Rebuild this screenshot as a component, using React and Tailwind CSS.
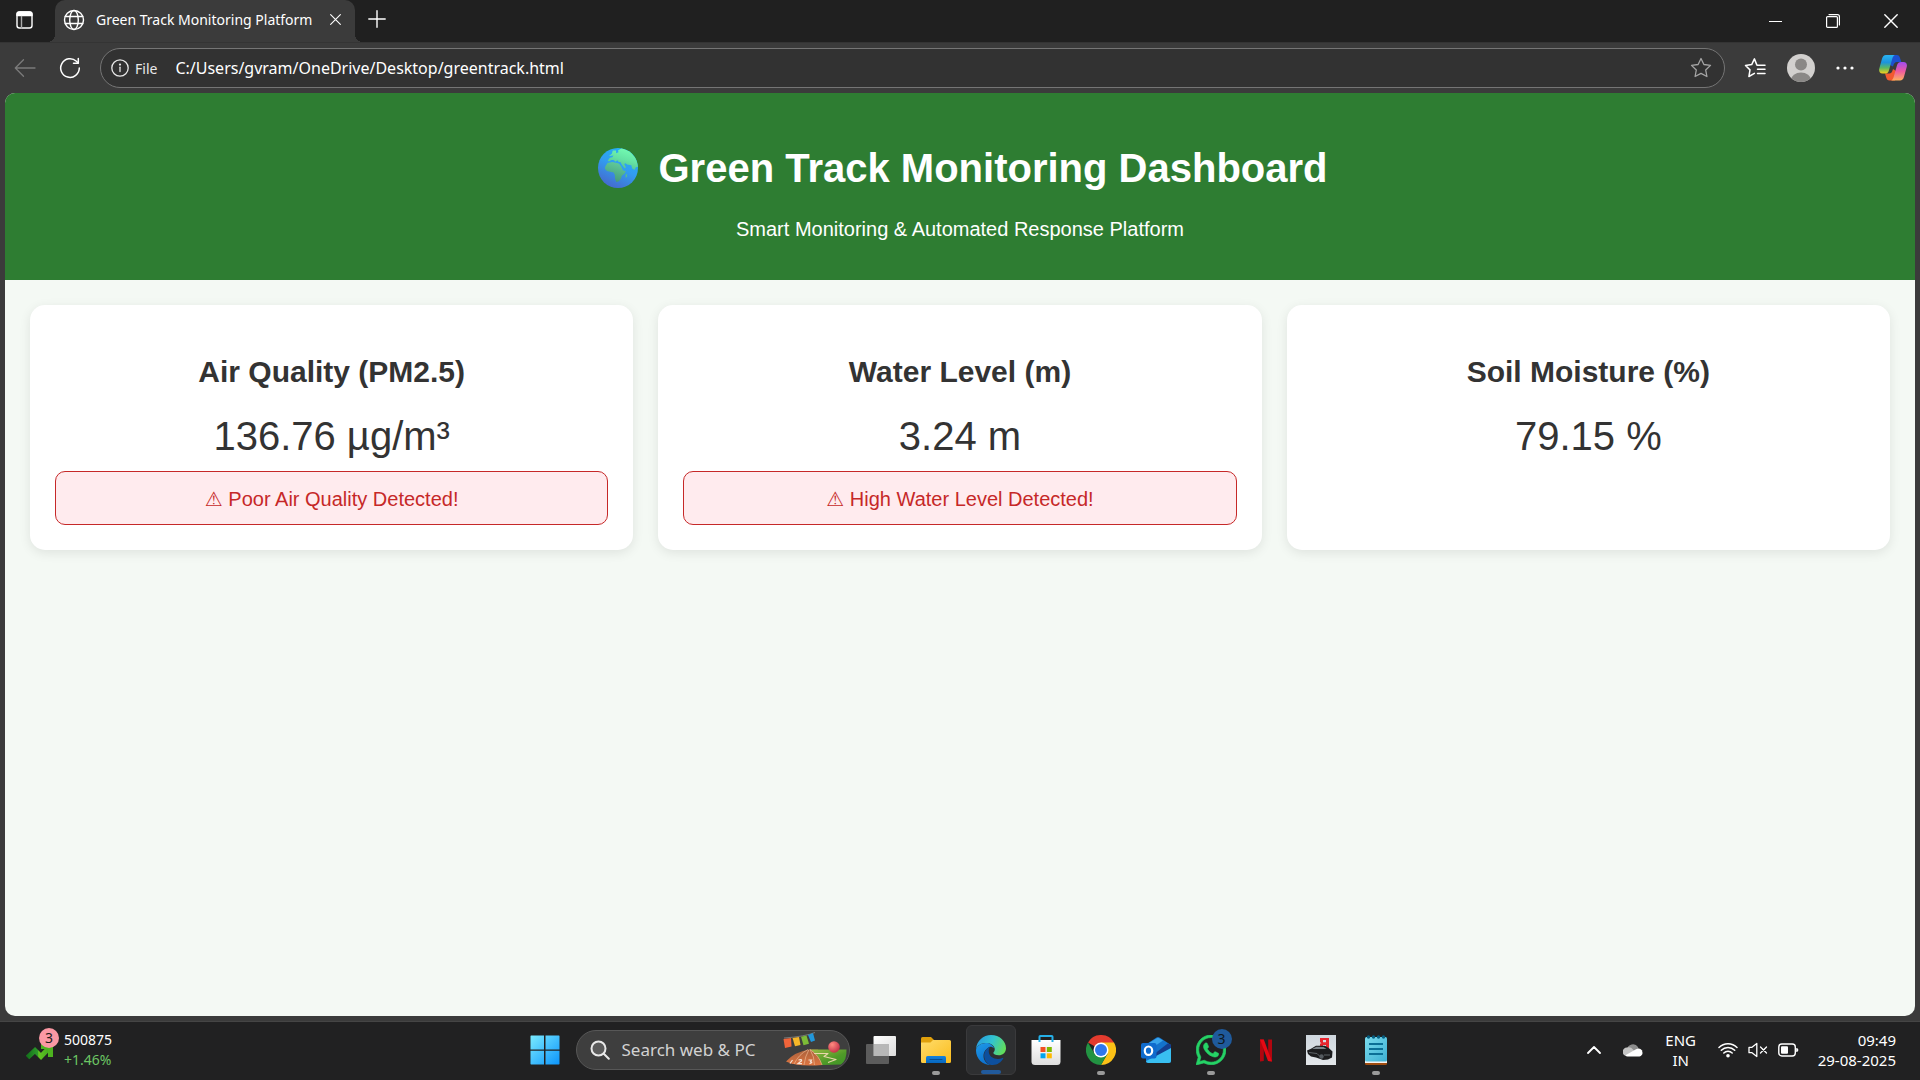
import React from "react";

const ui = "font-['Noto_Sans','Open_Sans',sans-serif]";

/* ---------- browser chrome icons ---------- */

const line = { fill: "none", stroke: "currentColor", strokeLinecap: "round", strokeLinejoin: "round" };

const TabActionsIcon = () => (
  <svg width="20" height="20" viewBox="0 0 20 20" {...line} strokeWidth="1.4">
    <rect x="2" y="2" width="15" height="16" rx="2.5" />
    <path d="M2 5.500V4.500A2.5 2.5 0 0 1 4.500 2h10A2.5 2.5 0 0 1 17 4.500V5.500Z" fill="currentColor" />
    <path d="M6.500 6.500V18" stroke="#aaa" />
  </svg>
);

const GlobeIcon = () => (
  <svg width="22" height="22" viewBox="0 0 22 22" {...line} strokeWidth="1.4">
    <circle cx="11" cy="11" r="9.500" />
    <ellipse cx="11" cy="11" rx="4.300" ry="9.500" />
    <path d="M2.300 7.500h17.400M2.300 14.500h17.400" />
  </svg>
);

const CrossIcon = ({ size }) => (
  <svg width={size} height={size} viewBox="0 0 12 12" {...line} strokeWidth="1.2">
    <path d="M.7.7l10.600 10.600M11.300.7L.7 11.300" />
  </svg>
);

const PlusIcon = () => (
  <svg width="18" height="18" viewBox="0 0 18 18" {...line} strokeWidth="1.400">
    <path d="M9 .8v16.400M.8 9h16.400" />
  </svg>
);

const BackIcon = () => (
  <svg width="22" height="20" viewBox="0 0 22 20" {...line} strokeWidth="1.300">
    <path d="M21 10H1.500M9.500 1.800L1.300 10l8.200 8.200" />
  </svg>
);

const ReloadIcon = () => (
  <svg width="22" height="22" viewBox="0 0 22 22" {...line} strokeWidth="1.500">
    <path d="M20.300 11a9.300 9.300 0 1 1-2.900-6.700l1.600 1.600" />
    <path d="M19.300 1.500v4.700h-4.800" />
  </svg>
);

const InfoIcon = () => (
  <svg width="18" height="18" viewBox="0 0 18 18" {...line} strokeWidth="1.300">
    <circle cx="9" cy="9" r="8.200" />
    <path d="M9 8.200v4.300" />
    <circle cx="9" cy="5.600" r=".5" fill="currentColor" />
  </svg>
);

const StarIcon = () => (
  <svg width="22" height="22" viewBox="0 0 22 22" {...line} strokeWidth="1.300">
    <path d="M11 1.500l2.900 6 6.600.9-4.800 4.600 1.200 6.500-5.900-3.100-5.900 3.100 1.200-6.500L1.500 8.400l6.600-.9z" />
  </svg>
);

const FavoritesIcon = () => (
  <svg width="22" height="22" viewBox="0 0 22 22" {...line} strokeWidth="1.500">
    <path d="M13.500 8.200l-.6-.1L10.400 1.900 7.700 7.600l-6.200.9 4.500 4.400-1.100 6.600 5.500-3.100M13.500 8.200H21M13.500 12.300H21M13.500 16.400H21" />
  </svg>
);

const Avatar = () => (
  <svg width="28" height="28" viewBox="0 0 28 28">
    <defs>
      <clipPath id="avatarClip"><circle cx="14" cy="14" r="14" /></clipPath>
    </defs>
    <g clipPath="url(#avatarClip)">
      <rect width="28" height="28" fill="#d2d0ce" />
      <circle cx="14" cy="10.500" r="6" fill="#8a8886" />
      <ellipse cx="14" cy="26" rx="10" ry="7.500" fill="#8a8886" />
    </g>
  </svg>
);

const CopilotIcon = () => (
  <svg width="28" height="28" viewBox="0 0 28 28">
    <defs>
      <linearGradient id="cpA" x1="0" y1="0" x2="0" y2="1">
        <stop offset="0" stopColor="#2ab4f2" /><stop offset=".4" stopColor="#1c93dd" />
        <stop offset=".7" stopColor="#5cb860" /><stop offset="1" stopColor="#f6cf1c" />
      </linearGradient>
      <linearGradient id="cpB" x1="0" y1="0" x2="0" y2="1">
        <stop offset="0" stopColor="#a04cf0" /><stop offset=".5" stopColor="#ee5aa0" />
        <stop offset="1" stopColor="#ffb05e" />
      </linearGradient>
    </defs>
    <path d="M12 1h5.800c1.800 0 2.600 1 3.200 2.900l1.300 4H18c-2.200 0-3.200 1.600-4 4.600L11 11z" fill="#1d50cf" />
    <path d="M16 26.500h-5.500c-1.900 0-2.700-1-3.300-2.900L6 19.500h4c2.200 0 3.300-1.600 4-4.600l3 2z" fill="#f25a30" />
    <path d="M7 1h9c-1.600.6-2.200 2-2.800 4L9.900 16.400c-.7 2.300-1.900 3.100-4 3.100H3.500C.6 19.500-.4 17.200.3 14.500l2.700-9.700C3.700 2.300 4.900 1 7 1z" fill="url(#cpA)" />
    <path d="M21 26.500h-9c1.600-.6 2.200-2 2.800-4l3.300-11.400c.7-2.300 1.900-3.100 4-3.100h2.400c2.900 0 3.900 2.300 3.200 5L25 22.700c-.7 2.500-1.900 3.800-4 3.800z" fill="url(#cpB)" />
  </svg>
);

/* ---------- page icons ---------- */

const EarthIcon = () => (
  <svg width="40" height="40" viewBox="0 0 42 42" className="shrink-0">
    <defs>
      <linearGradient id="sea" x1=".8" y1="0" x2=".3" y2="1">
        <stop offset="0" stopColor="#22b5f8" /><stop offset=".5" stopColor="#329cf0" /><stop offset="1" stopColor="#4668cc" />
      </linearGradient>
      <linearGradient id="land" x1=".8" y1="0" x2=".4" y2="1">
        <stop offset="0" stopColor="#76ffb4" /><stop offset=".55" stopColor="#64e2a4" /><stop offset="1" stopColor="#54bb90" />
      </linearGradient>
      <linearGradient id="africa" x1=".8" y1="0" x2=".5" y2="1">
        <stop offset="0" stopColor="#62cf9c" /><stop offset="1" stopColor="#459a7c" />
      </linearGradient>
      <clipPath id="earthClip"><circle cx="21" cy="21" r="21" /></clipPath>
    </defs>
    <circle cx="21" cy="21" r="21" fill="url(#sea)" />
    <g clipPath="url(#earthClip)">
      <path d="M11.500 8.500L14.500 6l1-3.500 3.500 0 0 3 2.500-1L21 2.500 25 0l9 4 6 7 2.500 9-2.500 0-1.800 3-2.300-1.600-.9-3.400-4.500-.6-1.500-1.400-1.500.8 1.800 3.400-1.200 1.300-2.800-3.600-1.800-3.100-1.700 0-1.500-2-2 1.700-1.800-1.800-2.500 0-2.500 1.600-1.200-1.200 2.200-2.800 2.500-.5 1.300-1.800z" fill="url(#land)" />
      <path d="M7.800 19.200L10 15.700l5-1.100 3.500.9 3.500.9 2.200 2.800 2.100 4.300 2.900.7-1.400 2.800-2.800 2.200-.8 2.800-2.200 2.900-2.800.7-1.400-3.600v-3.500l-1.400-2.900-3.600-.7-3.500-.7-2.200-2.800z" fill="url(#africa)" />
      <path d="M29 28l1.500-1 0 3-1.500 1.500z" fill="#55bd90" />
    </g>
  </svg>
);

/* ---------- taskbar icons ---------- */

const WindowsLogo = () => (
  <svg width="30" height="30" viewBox="0 0 30 30">
    <defs>
      <linearGradient id="win" gradientUnits="userSpaceOnUse" x1="0" y1="0" x2="30" y2="30">
        <stop offset="0" stopColor="#7cecff" /><stop offset="1" stopColor="#0a93fb" />
      </linearGradient>
    </defs>
    <path d="M1 .5h13v14H.5V1zM15.500.5h13.500l.5.5v13.500h-14zM.5 15.800h13.500v13.700H1l-.5-.5zM15.500 15.800h14V29l-.5.5H15.500z" fill="url(#win)" />
  </svg>
);

const SearchIcon = () => (
  <svg width="20" height="20" viewBox="0 0 20 20" fill="none" stroke="#e8e8e8" strokeWidth="2" strokeLinecap="round">
    <circle cx="8.500" cy="8.500" r="7" fill="#5b5b5b" />
    <path d="M13.800 13.800l5 5" />
  </svg>
);

const SportsArt = () => (
  <svg width="64" height="36" viewBox="0 0 64 36">
    <defs>
      <linearGradient id="track" x1="0" y1="0" x2="0" y2="1">
        <stop offset="0" stopColor="#a8603c" /><stop offset="1" stopColor="#df7641" />
      </linearGradient>
      <linearGradient id="grass" x1="0" y1="0" x2="1" y2="1">
        <stop offset="0" stopColor="#9bbb45" /><stop offset=".6" stopColor="#4f9a28" /><stop offset="1" stopColor="#3e9626" />
      </linearGradient>
      <radialGradient id="ball" cx=".35" cy=".3" r=".8">
        <stop offset="0" stopColor="#ff8b80" /><stop offset="1" stopColor="#bd2843" />
      </radialGradient>
    </defs>
    <path d="M1 6Q22 4.500 32 .5" stroke="#777" fill="none" />
    <path d="M.5 7l7.500-1 .5 8.500-6.500 1.500z" fill="#f0643a" />
    <path d="M9.500 6l6.500-.9 1.500 7.800-5.500 1.300z" fill="#f6b628" />
    <path d="M18 4.800l5.500-1.300 2.500 8.300-5.500 1.400z" fill="#7dbb37" />
    <path d="M25 3l5-2 2 7.500-4 1.500z" fill="#2297db" />
    <path d="M3 29.500Q12 19.500 27 17.500l8 0 4 15.500Q14 35 3 29.500z" fill="url(#track)" />
    <path d="M27 17.500h36.500Q64 28 58 32.500l-19 .5Q36 23 27 17.500z" fill="url(#grass)" />
    <path d="M25 17.500Q16 22 11 32M26 17.500q-4 7-5 15.500M27 17.500q4.500 7 4.500 15.500M27 17.500q9 6 12 15.500" stroke="#e7ad87" strokeWidth=".8" fill="none" />
    <path d="M9.500 28l-2.500 3.500M15.500 28q3.500-1 3 .8l-3.500 2.800h4M25.500 28h3l-1 1.700q3 .6-1 2" stroke="#f5e3d5" strokeWidth="1.200" fill="none" />
    <path d="M31 21.500h14l-4 3 12 3-8 3" stroke="#e8d6aa" strokeWidth="1.200" fill="none" strokeLinejoin="round" />
    <circle cx="51" cy="15" r="5.800" fill="url(#ball)" />
  </svg>
);

const TaskViewIcon = () => (
  <svg width="30" height="30" viewBox="0 0 30 30">
    <defs>
      <linearGradient id="tv" x1="0" y1="0" x2="1" y2="1">
        <stop offset="0" stopColor="#fff" /><stop offset="1" stopColor="#dcdcdc" />
      </linearGradient>
    </defs>
    <rect x="7.500" y="1" width="22.500" height="20" rx="1" fill="url(#tv)" />
    <rect x="0" y="9" width="23" height="20" rx="1" fill="#666" opacity=".85" />
    <rect x="7.500" y="9" width="15.500" height="12" fill="#b8b8b8" />
  </svg>
);

const ExplorerIcon = () => (
  <svg width="30" height="30" viewBox="0 0 30 30">
    <defs>
      <linearGradient id="fold" x1="0" y1="0" x2="1" y2="1">
        <stop offset="0" stopColor="#ffdc6b" /><stop offset="1" stopColor="#fbbc1c" />
      </linearGradient>
      <linearGradient id="foldBlue" x1="0" y1="0" x2="0" y2="1">
        <stop offset="0" stopColor="#1582dc" /><stop offset="1" stopColor="#0667c0" />
      </linearGradient>
    </defs>
    <path d="M0 3.500Q0 2 1.500 2H10l3 3v4H0z" fill="#e0a00c" />
    <path d="M0 7.500h9.500L12 5h16.500Q30 5 30 6.500v20q0 1.500-1.500 1.500h-27Q0 28 0 26.500z" fill="url(#fold)" />
    <path d="M5 28v-5.500Q5 21 6.500 21h17q1.500 0 1.500 1.500V28z" fill="url(#foldBlue)" />
    <path d="M9 24.500h12" stroke="#084e92" strokeLinecap="round" />
  </svg>
);

const EdgeIcon = () => (
  <svg width="30" height="30" viewBox="0 0 24 24">
    <defs>
      <linearGradient id="edgeTop" x1="0" y1=".3" x2="1" y2=".6">
        <stop offset="0" stopColor="#279be0" /><stop offset=".5" stopColor="#32c3cf" /><stop offset="1" stopColor="#63dd58" />
      </linearGradient>
      <linearGradient id="edgeMid" x1="0" y1="0" x2=".4" y2="1">
        <stop offset="0" stopColor="#1f9ae8" /><stop offset="1" stopColor="#0c70ce" />
      </linearGradient>
    </defs>
    <path d="M0 11C.6 4.700 5.700 0 12 0c7 0 12 5 12 10.500 0 3.600-2.800 5.600-5.800 5.600-2.700 0-4.300-.9-4.300-1.800 0-.6 1.100-1 1.100-2.900 0-2.500-2.800-5-6.500-5C4.500 6.400 1.400 8 0 11z" fill="url(#edgeTop)" />
    <path d="M8 6.400C4 6.400 0 9 0 12.300 0 19 5.400 24 12 24c-4-1-6-4-6-7.200 0-3.300 2-5.800 5-7.400 1.200-.2 2.600.3 3.400 1.200C13.500 8 11 6.400 8 6.400z" fill="url(#edgeMid)" />
    <path d="M11.200 9.300C8.400 10.700 6.500 13.300 6.500 16.500 6.500 21 10 24 13.500 24c3.600 0 6.700-2.300 8.300-5.200.3-.6-.1-.8-.6-.5-4.200 2.100-11 .2-11-5.300 0-1.400.4-2.800 1-3.700z" fill="#0d4f9d" />
  </svg>
);

const StoreIcon = () => (
  <svg width="30" height="30" viewBox="0 0 30 30">
    <defs>
      <linearGradient id="bag" x1="0" y1="0" x2="0" y2="1">
        <stop offset="0" stopColor="#fff" /><stop offset="1" stopColor="#dedede" />
      </linearGradient>
    </defs>
    <path d="M.5 5h29v21.500q0 3.500-3.500 3.500H4Q.5 30 .5 26.500z" fill="url(#bag)" />
    <path d="M8.500 7V1.800q0-.8.8-.8h11.400q.8 0 .8.800V7" fill="none" stroke="#25b0e8" strokeWidth="2" />
    <path d="M9.500 12h5v5h-5z" fill="#f25022" /><path d="M15.800 12h5v5h-5z" fill="#7fba00" />
    <path d="M9.500 18.300h5v5h-5z" fill="#00a4ef" /><path d="M15.800 18.300h5v5h-5z" fill="#ffb900" />
  </svg>
);

const ChromeIcon = () => (
  <svg width="30" height="30" viewBox="0 0 30 30">
    <path d="M15 15L2 7.500A15 15 0 0 1 28 7.500z" fill="#e33b2e" />
    <path d="M15 7.500H28A15 15 0 0 1 15 30l6.500-11.200z" fill="#fbc116" />
    <path d="M8.500 18.700L2 7.500A15 15 0 0 0 15 30l6.500-11.200L15 15z" fill="#229342" />
    <circle cx="15" cy="15" r="7.500" fill="#fff" /><circle cx="15" cy="15" r="6" fill="#2f77ec" />
  </svg>
);

const OutlookIcon = () => (
  <svg width="30" height="30" viewBox="0 0 30 30">
    <path d="M5 9.500L15.500 2.600q1.500-.9 3 0L30 10v15.500q0 2.500-2.500 2.500h-20Q5 28 5 25.500z" fill="#1473cc" />
    <path d="M8 8l9-5.600 5 3L11 13z" fill="#37a3ea" />
    <path d="M12 20L27 8.200 30 10v3.500L16 24z" fill="#143e8f" />
    <path d="M16 20.500l14-7.500v12.500q0 2.500-2.500 2.500h-20Q5 28 5 26z" fill="#39bff1" />
    <rect y="8" width="15.500" height="15.500" rx="2" fill="#0f6bcd" />
    <ellipse cx="7.500" cy="15.700" rx="3.700" ry="4.200" fill="none" stroke="#fff" strokeWidth="2.200" />
  </svg>
);

const WhatsAppIcon = () => (
  <svg width="30" height="30" viewBox="0 0 24 24" fill="#25d366" stroke="#25d366" strokeWidth=".5">
    <path d="M17.472 14.382c-.297-.149-1.758-.867-2.030-.967-.273-.099-.471-.148-.670.150-.197.297-.767.966-.940 1.164-.173.199-.347.223-.644.075-.297-.150-1.255-.463-2.390-1.475-.883-.788-1.480-1.761-1.653-2.059-.173-.297-.018-.458.130-.606.134-.133.298-.347.446-.520.149-.174.198-.298.298-.497.099-.198.050-.371-.025-.520-.075-.149-.669-1.612-.916-2.207-.242-.579-.487-.5-.669-.510-.173-.008-.371-.010-.570-.010-.198 0-.520.074-.792.372-.272.297-1.040 1.016-1.040 2.479 0 1.462 1.065 2.875 1.213 3.074.149.198 2.096 3.200 5.077 4.487.709.306 1.262.489 1.694.625.712.227 1.360.195 1.871.118.571-.085 1.758-.719 2.006-1.413.248-.694.248-1.289.173-1.413-.074-.124-.272-.198-.570-.347m-5.421 7.403h-.004a9.870 9.870 0 01-5.031-1.378l-.361-.214-3.741.982.998-3.648-.235-.374a9.860 9.860 0 01-1.510-5.260c.001-5.450 4.436-9.884 9.888-9.884 2.640 0 5.122 1.030 6.988 2.898a9.825 9.825 0 012.893 6.994c-.003 5.450-4.437 9.884-9.885 9.884m8.413-18.297A11.815 11.815 0 0012.050 0C5.495 0 .160 5.335.157 11.892c0 2.096.547 4.142 1.588 5.945L.057 24l6.305-1.654a11.882 11.882 0 005.683 1.448h.005c6.554 0 11.890-5.335 11.893-11.893a11.821 11.821 0 00-3.480-8.413z" />
  </svg>
);

const NetflixIcon = () => (
  <svg width="30" height="30" viewBox="0 0 30 30">
    <path d="M9 4.500h3.800V26L9 26.500zM17.200 4.500H21v22l-3.800-.5z" fill="#b1060f" />
    <path d="M9 4.500h3.800L21 26.500l-4-.5z" fill="#e50914" />
  </svg>
);

const CarIcon = () => (
  <svg width="30" height="30" viewBox="0 0 30 30">
    <defs>
      <linearGradient id="carBg" x1="0" y1="0" x2="0" y2="1">
        <stop offset="0" stopColor="#cfd7de" /><stop offset="1" stopColor="#e3e7ea" />
      </linearGradient>
    </defs>
    <rect width="30" height="30" fill="url(#carBg)" />
    <path d="M14 3h9v10H20V10h-3v3h-3V8.500h1.500L14 7zM17 5v2.300h3V5z" fill="#e8252f" fillRule="evenodd" />
    <path d="M1 15.500l4-1.700 5-3 9 0 4 2.500 3.500 3.200-.5 6-4 2-5 .5-7-2.500-5-1-3-2.500z" fill="#1b1c1e" />
    <path d="M6 14l4.500-2.300 7 .3 3 2z" fill="#7d858b" />
    <path d="M3 17.500l8 1 3 3M18 20h6" stroke="#5e6468" fill="none" />
    <circle cx="15.500" cy="21.500" r="2.200" fill="#555b60" />
  </svg>
);

const NotepadIcon = () => (
  <svg width="30" height="30" viewBox="0 0 30 30">
    <defs>
      <linearGradient id="note" x1="0" y1="0" x2="1" y2="1">
        <stop offset="0" stopColor="#7bdcee" /><stop offset="1" stopColor="#3db0d3" />
      </linearGradient>
    </defs>
    <rect x="4" y="25" width="22" height="5" rx="1.500" fill="#a14d10" />
    <rect x="4" y="24" width="22" height="4" fill="#f3f3f3" />
    <rect x="4" y="2" width="22" height="24.500" rx="1.500" fill="url(#note)" />
    <path d="M8 9h14M8 14h14M8 19h14" stroke="#0b6f96" strokeWidth="1.800" />
    <g fill="#085e80"><circle cx="7.500" cy="2" r="1.700" /><circle cx="12.500" cy="2" r="1.700" /><circle cx="17.500" cy="2" r="1.700" /><circle cx="22.500" cy="2" r="1.700" /></g>
  </svg>
);

const StockIcon = () => (
  <svg width="28" height="20" viewBox="0 0 28 20">
    <defs>
      <linearGradient id="stock" x1="0" y1="0" x2="1" y2="0">
        <stop offset="0" stopColor="#15741c" /><stop offset=".45" stopColor="#2d9a2a" /><stop offset=".5" stopColor="#63c421" /><stop offset="1" stopColor="#3fa71f" />
      </linearGradient>
    </defs>
    <path d="M1.500 15.500L9 8.500l6 6 9-9.500" fill="none" stroke="url(#stock)" strokeWidth="5" />
    <path d="M15 2h12v13h-5V7h-7z" fill="#4db31f" />
  </svg>
);

const CloudIcon = () => (
  <svg width="20" height="14" viewBox="0 0 20 14">
    <path d="M4 6.500A6 6 0 0 1 15 4l1 4-8 2z" fill="#8d8d8d" />
    <path d="M3.800 13A4.200 4.200 0 0 1 4 4.500q4-.8 6 2l5 6z" fill="#c4c4c4" />
    <path d="M2.500 12.200L13 6.200q4-1.800 5.800 1Q21 12 16.500 13.500H4.500q-1.500 0-2-1.300z" fill="#fff" />
  </svg>
);

const WifiIcon = () => (
  <svg width="20" height="16" viewBox="0 0 20 16" {...line} strokeWidth="1.500">
    <path d="M1 5.500a12.500 12.500 0 0 1 18 0M3.300 8.300a9.300 9.300 0 0 1 13.400 0M5.800 11a6 6 0 0 1 8.400 0" />
    <circle cx="10" cy="13.800" r="1.800" fill="currentColor" stroke="none" />
  </svg>
);

const MuteIcon = () => (
  <svg width="20" height="16" viewBox="0 0 20 16" {...line} strokeWidth="1.300">
    <path d="M1 5.300h3L8.800 1.500v13L4 10.700H1zM12.500 5l6 6M18.500 5l-6 6" />
  </svg>
);

const BatteryIcon = () => (
  <svg width="21" height="14" viewBox="0 0 21 14">
    <rect x=".8" y="1" width="16.500" height="12" rx="3" fill="none" stroke="#fff" strokeWidth="1.400" />
    <rect x="3" y="3.200" width="7" height="7.600" rx="1" fill="#fff" />
    <path d="M18.200 5q2.200 0 2.200 2t-2.200 2z" fill="#fff" />
  </svg>
);

/* ---------- browser ---------- */

function TabStrip() {
  return (
    <header className="flex h-[42px] items-stretch bg-[#202020] text-white">
      <button aria-label="Tab actions menu" className="flex w-[50px] items-center justify-center pb-[2px]"><TabActionsIcon /></button>
      <div className="relative ml-[5px] flex w-[300px] items-center rounded-t-[10px] bg-[#3b3b3b] pb-[3px] pl-2 before:absolute before:bottom-0 before:-left-2 before:size-2 before:bg-[radial-gradient(circle_at_0_0,transparent_8px,#3b3b3b_8px)] after:absolute after:-right-2 after:bottom-0 after:size-2 after:bg-[radial-gradient(circle_at_100%_0,transparent_8px,#3b3b3b_8px)]">
        <GlobeIcon />
        <span className="ml-[11px] flex-1 text-[14px] whitespace-nowrap">Green Track Monitoring Platform</span>
        <button aria-label="Close tab" className="mr-[14px]"><CrossIcon size={11} /></button>
      </div>
      <button aria-label="New tab" className="ml-[13px] pb-1"><PlusIcon /></button>
      <div className="ml-auto flex">
        <button aria-label="Minimize" className="flex w-[58px] items-center justify-center"><span className="h-px w-[13px] bg-white" /></button>
        <button aria-label="Restore" className="flex w-[58px] items-center justify-center">
          <svg width="14" height="14" viewBox="0 0 14 14" {...line} strokeWidth="1.200">
            <rect x=".6" y="2.600" width="10.800" height="10.800" rx="1" />
            <path d="M3 .6h8.500Q13.400.6 13.400 2.500V11" />
          </svg>
        </button>
        <button aria-label="Close" className="flex w-[58px] items-center justify-center"><CrossIcon size={14} /></button>
      </div>
    </header>
  );
}

function Toolbar() {
  return (
    <div className="flex h-[51px] items-center border-t border-[#343434] bg-[#3b3b3b] pr-[13px] pl-[14px] text-white">
      <button aria-label="Back" className="text-[#7b7b7b]"><BackIcon /></button>
      <button aria-label="Refresh" className="ml-[23px]"><ReloadIcon /></button>
      <div className="ml-[19px] flex h-10 flex-1 items-center rounded-full border border-[#757575] bg-[#323232] pr-[12px] pl-[10px]">
        <button className="flex items-center gap-[6px] text-[14px] text-[#e8e8e8]"><InfoIcon />File</button>
        <input aria-label="Address" defaultValue="C:/Users/gvram/OneDrive/Desktop/greentrack.html" className="ml-[18px] min-w-0 flex-1 bg-transparent text-[16px] text-white outline-none" />
        <button aria-label="Add to favorites" className="text-[#a5a5a5]"><StarIcon /></button>
      </div>
      <div className="ml-[19px] flex items-center gap-[21px]">
        <button aria-label="Favorites"><FavoritesIcon /></button>
        <button aria-label="Profile"><Avatar /></button>
        <button aria-label="Settings and more">
          <svg width="18" height="4" viewBox="0 0 18 4" fill="#fff"><circle cx="2" cy="2" r="1.600" /><circle cx="9" cy="2" r="1.600" /><circle cx="16" cy="2" r="1.600" /></svg>
        </button>
        <button aria-label="Copilot" className="ml-1"><CopilotIcon /></button>
      </div>
    </div>
  );
}

/* ---------- dashboard ---------- */

const cards = [
  { title: "Air Quality (PM2.5)", value: "136.76 µg/m³", alert: "Poor Air Quality Detected!" },
  { title: "Water Level (m)", value: "3.24 m", alert: "High Water Level Detected!" },
  { title: "Soil Moisture (%)", value: "79.15 %" },
];

function Card({ title, value, alert }) {
  return (
    <section className="rounded-[15px] bg-white p-[25px] text-center shadow-[0_3px_12px_rgba(0,0,0,0.09)]">
      <h2 className="mt-[25px] mb-[24px] text-[30px] leading-[34px] font-bold">{title}</h2>
      <p className="text-[40px] leading-[46px]">{value}</p>
      {alert && (
        <p role="alert" className="mt-3 rounded-[10px] border border-[#c62828] bg-[#ffebee] pt-4 pb-[14px] text-[20px] leading-[22px] text-[#c62828]">
          <span className="font-['DejaVu_Sans',sans-serif]">⚠</span> {alert}
        </p>
      )}
    </section>
  );
}

function Dashboard() {
  return (
    <main className="mx-[5px] mb-[5px] flex-1 overflow-hidden rounded-[10px] bg-[#f4f9f4] font-['Liberation_Sans',Arial,sans-serif] text-[#333]">
      <div className="bg-[#2e7d32] pt-[52px] pb-[39px] text-center text-white">
        <h1 className="flex items-center justify-center gap-5 pl-[6px] text-[40px] leading-[46px] font-bold"><EarthIcon />Green Track Monitoring Dashboard</h1>
        <p className="mt-[27px] text-[20px] leading-[23px]">Smart Monitoring &amp; Automated Response Platform</p>
      </div>
      <div className="grid grid-cols-3 gap-[25px] p-[25px]">
        {cards.map((c) => <Card key={c.title} {...c} />)}
      </div>
    </main>
  );
}

/* ---------- taskbar ---------- */

const apps = [
  { name: "Task View", icon: <TaskViewIcon /> },
  { name: "File Explorer", icon: <ExplorerIcon />, open: true },
  { name: "Microsoft Edge", icon: <EdgeIcon />, active: true },
  { name: "Microsoft Store", icon: <StoreIcon /> },
  { name: "Google Chrome", icon: <ChromeIcon />, open: true },
  { name: "Outlook", icon: <OutlookIcon /> },
  { name: "WhatsApp", icon: <WhatsAppIcon />, open: true, badge: "3" },
  { name: "Netflix", icon: <NetflixIcon /> },
  { name: "Racing game", icon: <CarIcon /> },
  { name: "Notepad", icon: <NotepadIcon />, open: true },
];

function AppButton({ name, icon, open, active, badge }) {
  return (
    <button aria-label={name} className={`relative flex size-[50px] items-center justify-center rounded-md ${active ? "border border-[#3a3a3c] bg-[#2e2f31]" : ""}`}>
      {icon}
      {badge && <span className="absolute top-[4px] right-[4px] flex size-5 items-center justify-center rounded-full bg-[#1f5a9c] text-[14px] leading-none text-[#101820]">{badge}</span>}
      {open && <span className="absolute bottom-0 h-1 w-2 rounded-full bg-[#9a9a9a]" />}
      {active && <span className="absolute bottom-0 h-1 w-5 rounded-full bg-[#215a9c]" />}
    </button>
  );
}

function Taskbar() {
  return (
    <footer className="grid h-[59px] grid-cols-[1fr_auto_1fr] items-center border-t border-[#454545] bg-[#212122] pb-[2px] text-white">
      <button className="flex items-center justify-self-start pl-[26px] text-left">
        <span className="relative pt-1">
          <StockIcon />
          <span className="absolute -top-[10px] left-[13px] flex size-5 items-center justify-center rounded-full bg-[#fb98a4] text-[14px] leading-none text-[#1b1b1b]">3</span>
        </span>
        <span className="ml-[10px] flex flex-col text-[14px] leading-5">
          <span>500875</span>
          <span className="text-[#6cc664]">+1.46%</span>
        </span>
      </button>
      <div className="flex items-center gap-[5px]">
        <button aria-label="Start" className="flex size-[50px] items-center justify-center"><WindowsLogo /></button>
        <label className="mx-px flex h-10 w-[274px] items-center rounded-full border border-[#575757] bg-[#3e3e3e] pr-[2px] pl-[13px]">
          <SearchIcon />
          <input aria-label="Search web & PC" placeholder="Search web & PC" className="ml-[12px] min-w-0 flex-1 bg-transparent text-[17px] outline-none placeholder:text-[#d2d2d2]" />
          <SportsArt />
        </label>
        {apps.map((a) => <AppButton key={a.name} {...a} />)}
      </div>
      <div className="flex items-center justify-self-end pr-6 text-[15px] leading-5">
        <button aria-label="Show hidden icons" className="mr-[22px]">
          <svg width="14" height="8" viewBox="0 0 14 8" {...line} strokeWidth="1.800"><path d="M1 7l6-6 6 6" /></svg>
        </button>
        <CloudIcon />
        <button className="ml-[23px] flex w-[30px] flex-col items-center"><span>ENG</span><span>IN</span></button>
        <button aria-label="Network, volume and battery" className="ml-[22px] flex items-center gap-[10px]"><WifiIcon /><MuteIcon /><BatteryIcon /></button>
        <button className="ml-[19px] flex flex-col items-end"><span>09:49</span><span>29-08-2025</span></button>
      </div>
    </footer>
  );
}

export default function App() {
  return (
    <div className={`flex min-h-screen flex-col bg-[#3b3b3b] ${ui}`}>
      <TabStrip />
      <Toolbar />
      <Dashboard />
      <Taskbar />
    </div>
  );
}
